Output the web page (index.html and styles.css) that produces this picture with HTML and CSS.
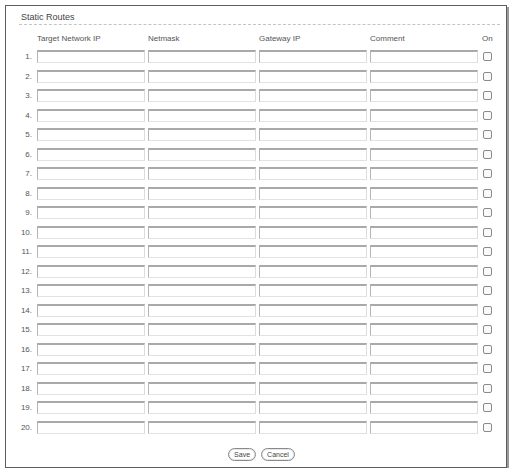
FILE: index.html
```html
<!DOCTYPE html>
<html>
<head>
<meta charset="utf-8">
<link rel="stylesheet" href="styles.css">
</head>
<body>
<div class="frame">
  <div class="title">Static Routes</div>
  <div class="grid" id="grid">
    <div class="hd"></div>
    <div class="hd">Target Network IP</div>
    <div class="hd">Netmask</div>
    <div class="hd">Gateway IP</div>
    <div class="hd">Comment</div>
    <div class="hd on">On</div>
  </div>
  <div class="buttons">
    <button class="btn">Save</button>
    <button class="btn">Cancel</button>
  </div>
</div>
<script>
var g = document.getElementById('grid');
for (var i = 1; i <= 20; i++) {
  var l = document.createElement('div'); l.className = 'num'; l.textContent = i + '.'; g.appendChild(l);
  for (var j = 0; j < 4; j++) { var d = document.createElement('div'); d.className = 'cell'; var inp = document.createElement('input'); inp.className='field'; d.appendChild(inp); g.appendChild(d); }
  var c = document.createElement('div'); c.className = 'cell chk'; var b = document.createElement('span'); b.className = 'box'; c.appendChild(b); g.appendChild(c);
}
</script>
</body>
</html>
```
FILE: styles.css
```css
html, body { margin: 0; padding: 0; background: #fff; }
body { font-family: "Liberation Sans", Arial, sans-serif; color: #555; }
.frame {
  margin: 5px 0 0 5px;
  width: 500px;
  height: 461px;
  border: 1px solid #5e5e5e;
  box-shadow: 2px 2px 0 #9a9a9a;
  box-sizing: content-box;
}
.title {
  margin: 6px 6px 0 13px;
  font-size: 9px;
  line-height: 11px;
  color: #444;
  padding-left: 2px;
  padding-bottom: 1px;
  border-bottom: 1px dashed #c4c4c4;
}
.grid {
  display: grid;
  grid-template-columns: 18px 108px 108px 108px 108px 16px;
  column-gap: 3px;
  grid-template-rows: 21px;
  grid-auto-rows: 19.5px;
  margin: 1px 0 0 10px;
}
.hd { font-size: 8px; color: #555; display: flex; align-items: flex-end; padding-bottom: 4px; }
.hd.on { padding-left: 1px; }
.num { font-size: 8px; color: #555; text-align: right; padding-right: 2px; display: flex; align-items: center; justify-content: flex-end; margin-left: -3px; }
.cell { display: flex; align-items: center; }
.field {
  box-sizing: border-box;
  width: 108px;
  height: 13px;
  margin: 0;
  padding: 0;
  background: #fff;
  border-top: 2px solid #a9a9a9;
  border-left: 1px solid #b5b5b5;
  border-right: 1px solid #dcdcdc;
  border-bottom: 1px solid #e2e2e2;
}
.chk { padding-left: 2px; }
.box {
  display: block;
  width: 9px; height: 9px;
  box-sizing: border-box;
  border: 1px solid #8a8a8a;
  border-radius: 2px;
  background: #fafafa;
}
.buttons {
  display: flex;
  justify-content: center;
  gap: 5px;
  margin-top: 11px;
  padding-left: 11px;
}
.btn {
  font-family: "Liberation Sans", Arial, sans-serif;
  font-size: 7px;
  color: #444;
  height: 13px;
  padding: 0 5px;
  border: 1px solid #8a8a8a;
  border-radius: 7px;
  background: #fff;
  box-shadow: inset 0 0 0 1px #e6e6e6;
  line-height: 11px;
}
```
